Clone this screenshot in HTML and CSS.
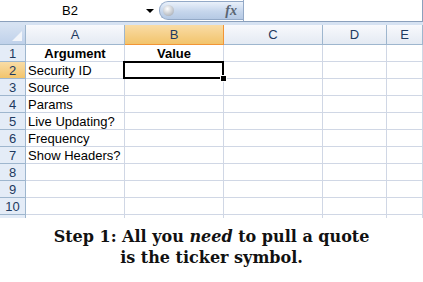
FILE: index.html
```html
<!DOCTYPE html>
<html lang="en">

<head>
    <meta charset="UTF-8">
    <title>Step 1</title>
    <link rel="stylesheet" href="styles.css">
</head>

<body>
    <div class="fbar">
        <div class="namebox"><span class="ref">B2</span><span class="arrow"></span></div>
        <div class="pill"><span class="knob"></span><span class="fx">fx</span></div>
        <div class="formula"></div>
    </div>
    <div class="band"></div>
    <div class="sheet">
        <div class="hd corner"><span class="tri"></span></div>
        <div class="hd">A</div>
        <div class="hd sel">B</div>
        <div class="hd">C</div>
        <div class="hd">D</div>
        <div class="hd">E</div>

        <div class="rh">1</div><div class="c b ctr">Argument</div><div class="c b ctr">Value</div><div class="c"></div><div class="c"></div><div class="c"></div>
        <div class="rh sel">2</div><div class="c">Security ID</div><div class="c active"><span class="handle"></span></div><div class="c"></div><div class="c"></div><div class="c"></div>
        <div class="rh">3</div><div class="c">Source</div><div class="c"></div><div class="c"></div><div class="c"></div><div class="c"></div>
        <div class="rh">4</div><div class="c">Params</div><div class="c"></div><div class="c"></div><div class="c"></div><div class="c"></div>
        <div class="rh">5</div><div class="c">Live Updating?</div><div class="c"></div><div class="c"></div><div class="c"></div><div class="c"></div>
        <div class="rh">6</div><div class="c">Frequency</div><div class="c"></div><div class="c"></div><div class="c"></div><div class="c"></div>
        <div class="rh">7</div><div class="c">Show Headers?</div><div class="c"></div><div class="c"></div><div class="c"></div><div class="c"></div>
        <div class="rh">8</div><div class="c"></div><div class="c"></div><div class="c"></div><div class="c"></div><div class="c"></div>
        <div class="rh">9</div><div class="c"></div><div class="c"></div><div class="c"></div><div class="c"></div><div class="c"></div>
        <div class="rh">10</div><div class="c"></div><div class="c"></div><div class="c"></div><div class="c"></div><div class="c"></div>
        <div class="rh cut"></div><div class="c cut"></div><div class="c cut"></div><div class="c cut"></div><div class="c cut"></div><div class="c cut"></div>
    </div>
    <p class="caption">Step 1: All you <em>need</em> to pull a quote<br>is the ticker symbol.</p>
</body>

</html>
```
FILE: styles.css
```css
body {
    margin: 0;
    background: #fff;
    font-family: "Liberation Sans", Arial, sans-serif;
}

.fbar {
    display: flex;
    height: 22px;
    border-bottom: 1px solid #8ba0bc;
    border-right: 1px solid #8ba0bc;
    box-sizing: border-box;
    width: 423px;
}

.namebox {
    width: 159px;
    display: flex;
    align-items: center;
    font-size: 13px;
    color: #000;
}

.ref {
    width: 140px;
    text-align: center;
}

.arrow {
    width: 0;
    height: 0;
    margin-left: 6px;
    border-left: 4px solid transparent;
    border-right: 4px solid transparent;
    border-top: 4px solid #000;
}

.pill {
    width: 84px;
    height: 19px;
    margin-top: 1px;
    box-sizing: border-box;
    border: 1px solid #93a9c7;
    border-right: none;
    border-radius: 9px 0 0 9px;
    background: linear-gradient(#eaf1fa, #c6d6ec 55%, #b5c9e4);
    display: flex;
    align-items: center;
    justify-content: space-between;
    padding: 0 6px 0 3px;
}

.knob {
    width: 11px;
    height: 11px;
    border-radius: 50%;
    background: radial-gradient(circle at 40% 35%, #fff, #c2c6cc 60%, #9aa0a8);
}

.fx {
    font-family: "Liberation Serif", serif;
    font-style: italic;
    font-weight: bold;
    font-size: 14px;
    color: #5a6572;
}

.formula {
    flex: 1;
    border-left: 1px solid #93a9c7;
}

.band {
    height: 3px;
    background: #d6e2f2;
}

.sheet {
    display: grid;
    grid-template-columns: 26px 99px 99px 99px 64px 1fr;
    grid-template-rows: 20px repeat(10, 17px) 3px;
    font-size: 13px;
}

.hd {
    box-sizing: border-box;
    border-right: 1px solid #9eb6ce;
    border-bottom: 1px solid #9eb6ce;
    background: linear-gradient(#f8f9fc, #e4eaf3);
    color: #1e3a60;
    text-align: center;
    line-height: 20px;
}

.hd.sel {
    background: linear-gradient(#f9dca6, #f2c46c);
    border-color: #f29536;
}

.corner {
    position: relative;
    background: linear-gradient(#d6e2f2, #bfd1ea);
}

.tri {
    position: absolute;
    right: 3px;
    bottom: 3px;
    width: 0;
    height: 0;
    border-left: 10px solid transparent;
    border-bottom: 10px solid #f2f5fa;
}

.rh {
    box-sizing: border-box;
    border-right: 1px solid #9eb6ce;
    border-bottom: 1px solid #9eb6ce;
    background: #e4ecf7;
    color: #1e3a60;
    text-align: center;
    line-height: 17px;
}

.rh.sel {
    background: linear-gradient(#f9dca6, #f2c46c);
}

.c {
    box-sizing: border-box;
    border-right: 1px solid #d0d7e5;
    border-bottom: 1px solid #d0d7e5;
    line-height: 17px;
    padding-left: 2px;
    white-space: nowrap;
}

.b {
    font-weight: bold;
}

.ctr {
    text-align: center;
    padding-left: 0;
}

.cut {
    border-bottom: none;
}

.active {
    position: relative;
}

.active::before {
    content: "";
    position: absolute;
    left: -2px;
    top: -1px;
    right: -1px;
    bottom: -1px;
    border: 2px solid #000;
}

.handle {
    position: absolute;
    right: -4px;
    bottom: -4px;
    width: 5px;
    height: 5px;
    background: #000;
    border: 1px solid #fff;
    z-index: 1;
}

.caption {
    margin: 8px 0 0;
    text-align: center;
    font-family: "DejaVu Serif", Georgia, serif;
    font-weight: bold;
    font-size: 16px;
    line-height: 21px;
    color: #111;
}

.caption em {
    font-style: italic;
}
```
